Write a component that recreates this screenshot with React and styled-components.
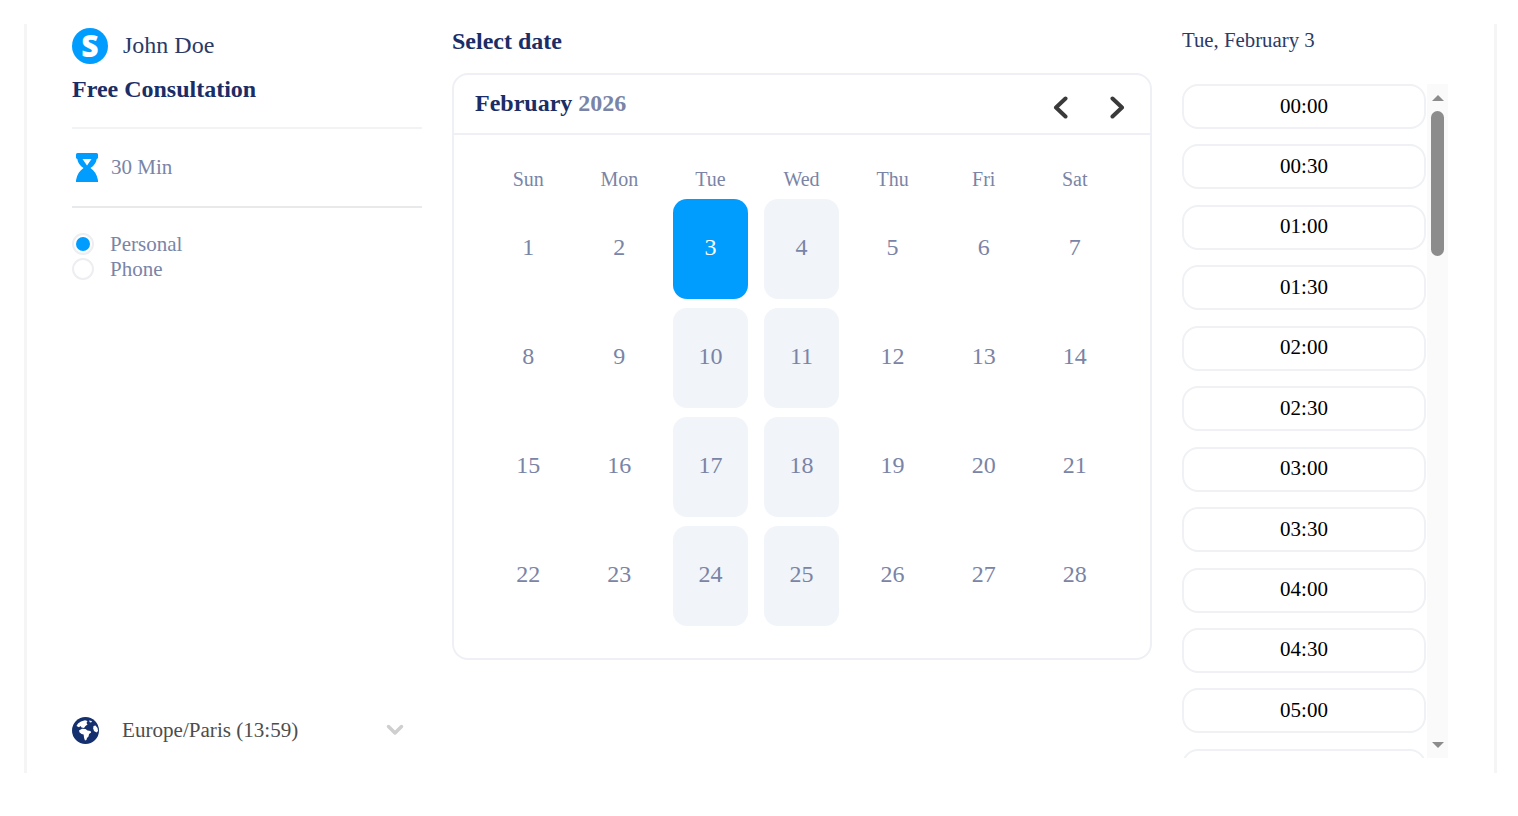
import React from "react";
import styled, { createGlobalStyle } from "styled-components";

const Global = createGlobalStyle`
  html, body { margin: 0; padding: 0; background: #fff; overflow: hidden; }
  body { font-family: "Liberation Serif", "Times New Roman", serif; }
  * { box-sizing: border-box; }
`;
const Shell = styled.div`
  width: 1518px; height: 816px; padding-top: 24px; padding-left: 24px;
`;
const Frame = styled.div`
  width: 1473px; height: 749px;
  border-left: 3px solid #f5f5f6; border-right: 3px solid #f5f5f6;
  padding-left: 45px;
  display: flex; gap: 30px;
`;
const LeftCol = styled.aside`
  width: 350px; display: flex; flex-direction: column; padding-top: 4px; padding-bottom: 29px;
`;
const Host = styled.div`
  height: 36px; display: flex; align-items: center; gap: 15px;
  font-size: 24px; color: #2b3a67;
`;
const HostName = styled.span`margin-bottom: 2px;`;
const Logo = styled.div`
  width: 36px; height: 36px; border-radius: 50%; background: #009dff; color: #fff;
  display: flex; align-items: center; justify-content: center;
  font-family: "Open Sans", sans-serif; font-weight: 800; font-size: 30px; line-height: 1;
`;
const EventName = styled.h1`
  margin: 12px 0 0; height: 28px; font-size: 24px; line-height: 26px; font-weight: 700; color: #1a2d66;
`;
const Rule = styled.hr`
  width: 100%; height: 2px; margin: ${p => p.$top}px 0 0; border: 0; background: ${p => p.$color};
`;
const Duration = styled.div`
  margin-top: 23px; height: 31px; display: flex; align-items: center;
  font-size: 21px; color: #7a84a6; padding-left: 4px; gap: 13px;
`;
const Radios = styled.div`
  margin-top: 25px; display: flex; flex-direction: column; gap: 3px;
`;
const RadioRow = styled.label`
  height: 22px; display: flex; align-items: center; gap: 16px; font-size: 21px; color: #7a84a6;
`;
const RadioMark = styled.span`
  width: 22px; height: 22px; border-radius: 50%; border: 2px solid #eceef2; background: #fff;
  display: flex; align-items: center; justify-content: center;
  &::after { content: ""; width: 14px; height: 14px; border-radius: 50%; background: ${p => p.$on ? "#009dff" : "transparent"}; }
`;
const TimeZone = styled.div`
  margin-top: auto; height: 28px; display: flex; align-items: center;
  font-size: 21.1px; color: #4d4d4d; line-height: 26px;
`;
const GlobeIcon = styled.svg`
  width: 27px; height: 27px; margin-right: 23px; flex: none;
`;
const Caret = styled.svg`
  margin-left: auto; margin-right: 18px; width: 18px; height: 12px;
`;
const MidCol = styled.main`width: 700px; display: flex; flex-direction: column;`;
const Title = styled.h2`
  margin: 4px 0 0; height: 28px; font-size: 24px; line-height: 26px; font-weight: 700; color: #1a2d66;
`;
const Calendar = styled.section`
  margin-top: 17px; height: 587px; border: 2px solid #eef0f5; border-radius: 16px;
`;
const CalHead = styled.header`
  height: 60px; border-bottom: 2px solid #eef0f5; padding: 0 25px 0 21px;
  display: flex; align-items: center; justify-content: space-between;
`;
const Month = styled.div`
  font-size: 24px; font-weight: 700; color: #1a2d66; padding-bottom: 1px;
  & span { color: #7a84a6; }
`;
const Arrows = styled.div`display: flex; gap: 42px; align-items: center; padding-top: 6px;`;
const Weekdays = styled.div`
  margin-top: 32px; padding: 0 38px 0 37px; display: grid; grid-template-columns: repeat(7, 1fr); column-gap: 16.7px;
  height: 32px; font-size: 20px; color: #7a84a6; text-align: center; line-height: 24px;
`;
const Days = styled.div`
  padding: 0 38px 0 37px; display: grid; grid-template-columns: repeat(7, 1fr); column-gap: 16.7px;
  grid-auto-rows: 100px; row-gap: 9px;
`;
const Day = styled.div`
  border-radius: 14px; display: flex; align-items: center; justify-content: center;
  font-size: 24px; padding-bottom: 3px;
  background: ${p => p.$sel ? "#009dff" : p.$avail ? "#f1f4f9" : "transparent"};
  color: ${p => p.$sel ? "#fff" : "#7a84a6"};
`;
const RightCol = styled.aside`width: 266px; display: flex; flex-direction: column;`;
const DateLabel = styled.div`
  margin-top: 4px; height: 26px; font-size: 20.8px; line-height: 24px; color: #2b3a67;
`;
const SlotsBox = styled.div`
  position: relative; margin-top: 30px; height: 674px; overflow: hidden;
`;
const Slots = styled.div`
  height: 100%; overflow: hidden; display: flex; flex-direction: column; gap: 15.45px;
`;
const Slot = styled.button`
  flex: 0 0 45px; width: 244px; border: 2px solid #eff1f4; border-radius: 16px; background: #fff;
  font-family: inherit; font-size: 21px; color: #000; padding: 0 0 1px;
`;
const Rail = styled.div`
  position: absolute; top: 0; right: 0; bottom: 0; width: 21px; background: #fafafa;
  display: flex; flex-direction: column; align-items: center;
`;
const RailArrow = styled.div`
  height: 27px; width: 100%; display: flex; align-items: center; justify-content: center;
  &::before {
    content: ""; width: 0; height: 0;
    border-left: 6px solid transparent; border-right: 6px solid transparent;
    ${p => p.$down ? "border-top: 6px solid #8c8c8c;" : "border-bottom: 6px solid #8c8c8c;"}
  }
`;
const Thumb = styled.div`
  width: 13px; height: 145px; background: #8c8c8c; border-radius: 7px;
`;
const RailFill = styled.div`flex: 1;`;

const Hourglass = () => (
  <svg width="22" height="29" viewBox="0 0 22 29">
    <path fill="#009dff" fillRule="evenodd" d="M1.500 0h19A1.500 1.500 0 0 1 22 1.500v3c0 .8-.6 1.300-1.300 1.500C20.200 9.800 18 12.700 14.500 15c3.700 2.500 6.500 6.500 7.300 11.500.1.300.2.600.2 1V29H0v-1.500c0-.4.100-.7.200-1C1 21.500 3.800 17.500 7.500 15 4 12.700 1.800 9.800 1.300 6 .6 5.800 0 5.300 0 4.500v-3A1.500 1.500 0 0 1 1.500 0zM6.500 6h9L11 12.500z" />
  </svg>
);
const Chevron = ({ d }) => (
  <svg width="15" height="23" viewBox="0 0 15 23" fill="none" stroke="#3a3a3a" strokeWidth="4" strokeLinecap="round" strokeLinejoin="round">
    <path d={d} />
  </svg>
);
const Globe = () => (
  <GlobeIcon viewBox="0 0 27 27">
    <circle cx="13.500" cy="13.500" r="13.500" fill="#14306e" />
    <path fill="#fff" d="M6 6.500 9 4.500l4-1.200 2.500.8-1 2 1 1.500-2 1.300-1.500 2-2.500-.4-1-1.500-1.500 1.200L4.500 9z" />
    <path fill="#fff" d="M7 13.500l3-1.800 3.500.4 2 1.300 3 .6.600 1.500-2 1.500-.6 2.500-1.500 1.500-.6 2-1.400.4-.9-2.500-.5-3.400-2-.6-2-1.500z" />
    <path fill="#fff" d="M21.500 9l2-.5 2 2.500.6 3-1.600 1.500-2.500-1.500-.8-2.500z" />
    <path fill="#fff" d="M17 3.500l2.500 .4 .5 1.100-2 .5z" />
  </GlobeIcon>
);

const pad = n => String(n).padStart(2, "0");
const times = Array.from({ length: 11 }, (_, i) => `${pad(Math.floor(i / 2))}:${i % 2 ? "30" : "00"}`);
const weekdays = ["Sun", "Mon", "Tue", "Wed", "Thu", "Fri", "Sat"];
const days = Array.from({ length: 28 }, (_, i) => i + 1);

export default function App() {
  return (
    <Shell>
      <Global />
      <Frame>
        <LeftCol>
          <Host><Logo>S</Logo><HostName>John Doe</HostName></Host>
          <EventName>Free Consultation</EventName>
          <Rule $top={23} $color="#f2f3f5" />
          <Duration><Hourglass />30 Min</Duration>
          <Rule $top={23} $color="#e8e9eb" />
          <Radios>
            <RadioRow><RadioMark $on />Personal</RadioRow>
            <RadioRow><RadioMark />Phone</RadioRow>
          </Radios>
          <TimeZone>
            <Globe />
            Europe/Paris (13:59)
            <Caret viewBox="0 0 18 12" fill="none" stroke="#cfcfcf" strokeWidth="3.500" strokeLinecap="round" strokeLinejoin="round"><path d="M2.500 2.500 9 9l6.500-6.500" /></Caret>
          </TimeZone>
        </LeftCol>
        <MidCol>
          <Title>Select date</Title>
          <Calendar>
            <CalHead>
              <Month>February <span>2026</span></Month>
              <Arrows>
                <Chevron d="M12.500 2.500 3 11.500l9.500 9" />
                <Chevron d="M2.500 2.500 12 11.500l-9.500 9" />
              </Arrows>
            </CalHead>
            <Weekdays>{weekdays.map(w => <div key={w}>{w}</div>)}</Weekdays>
            <Days>
              {days.map(d => (
                <Day key={d} $sel={d === 3} $avail={(d - 3) % 7 === 0 || (d - 4) % 7 === 0}>{d}</Day>
              ))}
            </Days>
          </Calendar>
        </MidCol>
        <RightCol>
          <DateLabel>Tue, February 3</DateLabel>
          <SlotsBox>
            <Slots>
              {times.map(t => <Slot key={t}>{t}</Slot>)}
              <Slot aria-label="05:30" />
            </Slots>
            <Rail>
              <RailArrow />
              <Thumb />
              <RailFill />
              <RailArrow $down />
            </Rail>
          </SlotsBox>
        </RightCol>
      </Frame>
    </Shell>
  );
}
